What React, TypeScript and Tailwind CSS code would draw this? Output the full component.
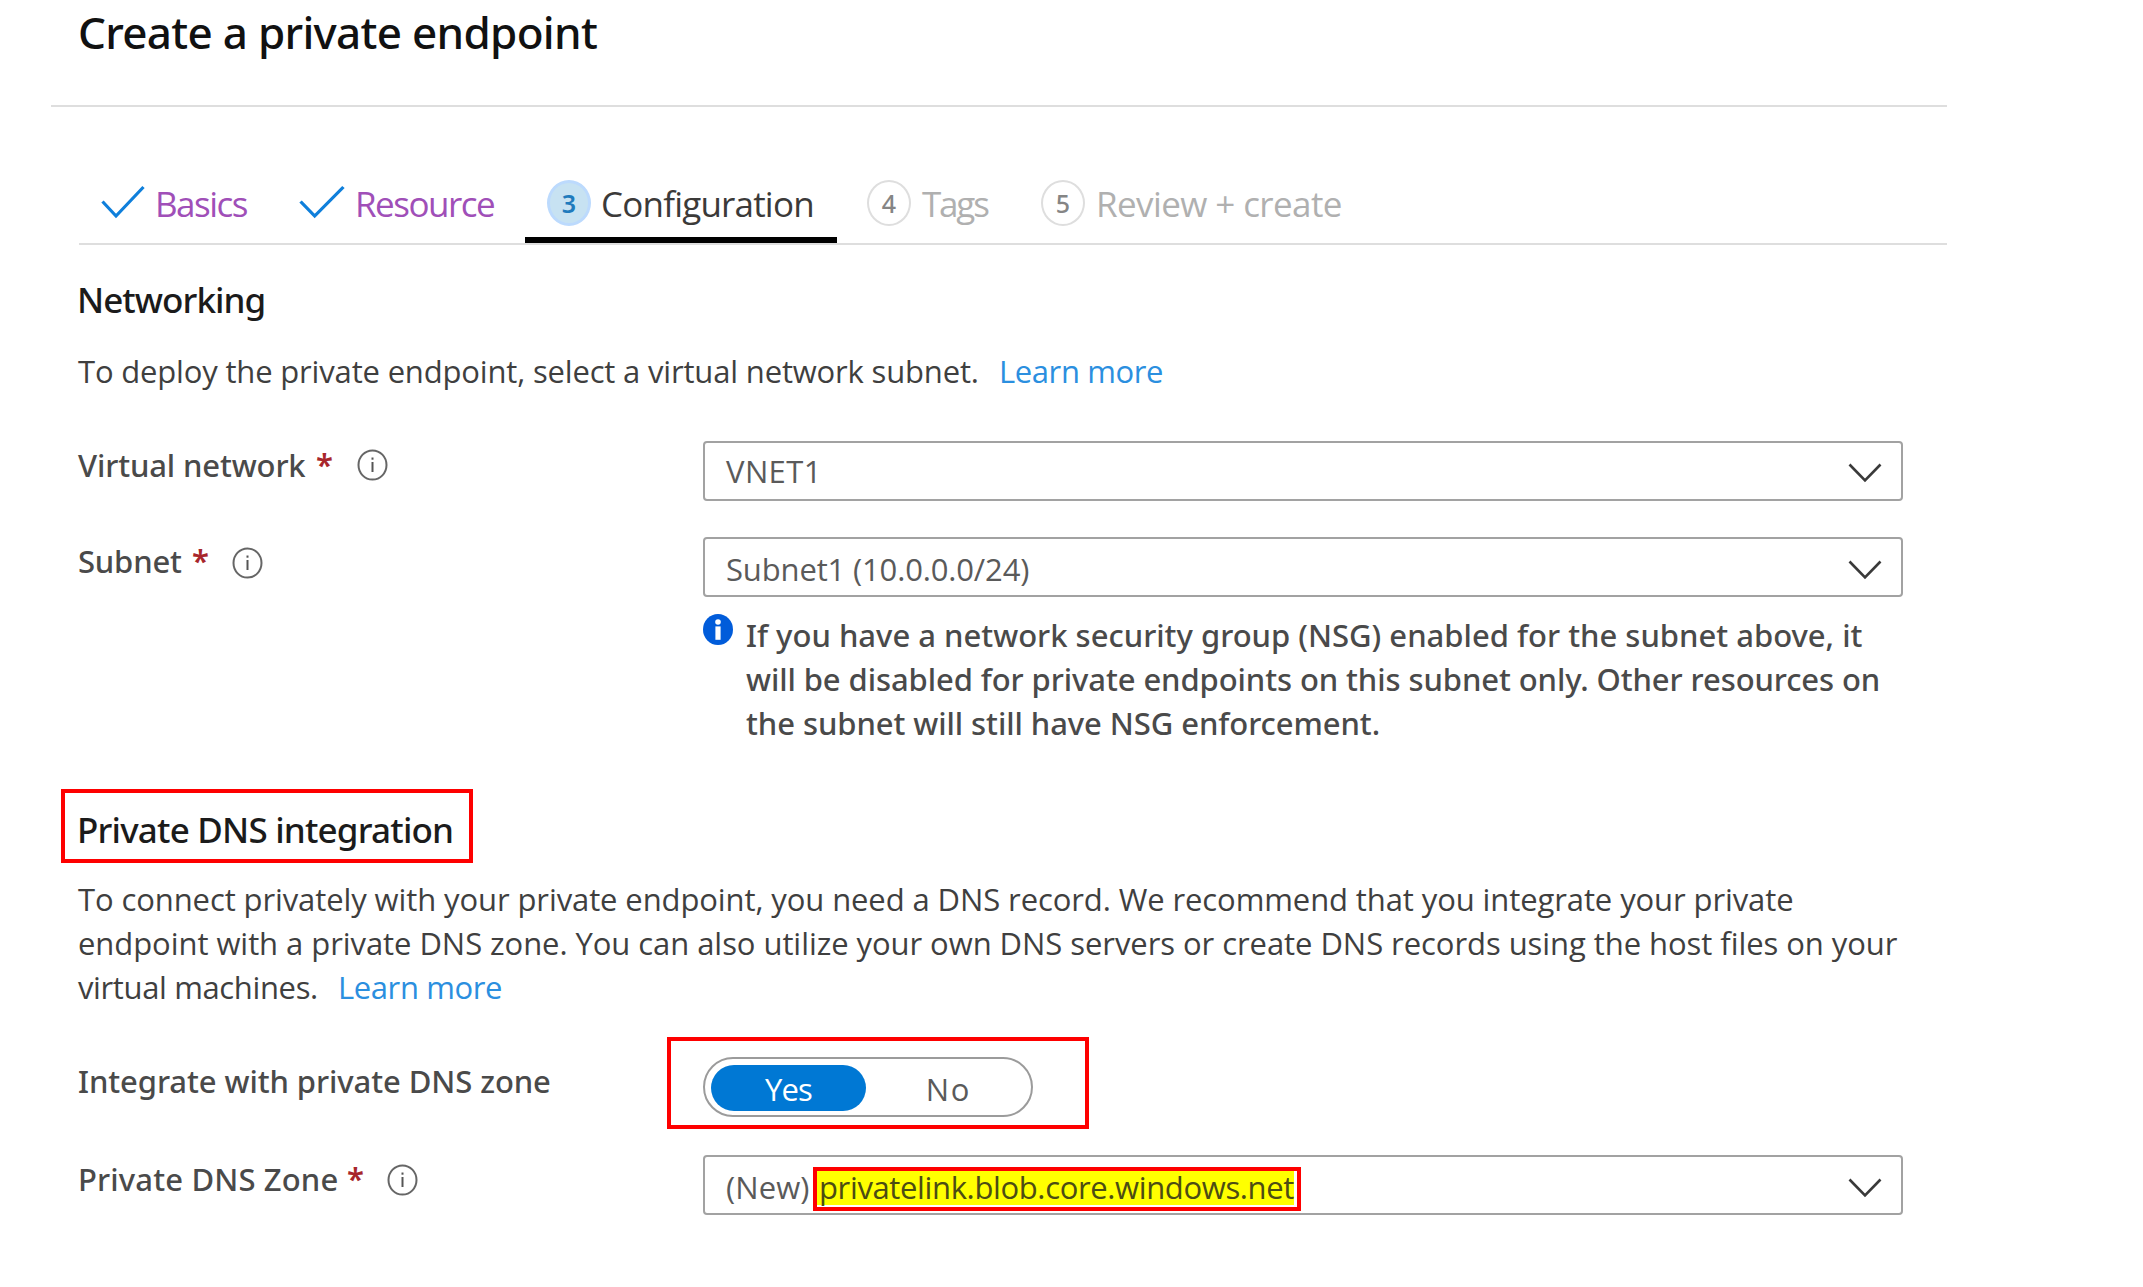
import type { ReactNode } from "react";

function Check({ className }: { className: string }) {
  return (
    <svg className={className} viewBox="0 0 44 34" fill="none" preserveAspectRatio="none">
      <path d="M1.5 16.5 L15 31 L42.5 2" stroke="#0f7fdb" strokeWidth="3.2" />
    </svg>
  );
}

function StepNumber({ children, active = false }: { children: ReactNode; active?: boolean }) {
  return (
    <span
      className={
        active
          ? "-mt-[2px] flex h-[46px] w-[44px] shrink-0 items-center justify-center rounded-[50%] border-[3px] border-[#bcdafd] bg-[#c7e2f2] font-['Noto_Sans',sans-serif] text-[25px] font-semibold text-[#1f7bbd]"
          : "-mt-[2px] flex h-[46px] w-[44px] shrink-0 items-center justify-center rounded-[50%] border-[2.5px] border-[#dedede] font-['Noto_Sans',sans-serif] text-[25px] font-medium text-[#858585]"
      }
    >
      {children}
    </span>
  );
}

function InfoCircle() {
  return (
    <svg className="h-8 w-[31px] shrink-0" viewBox="0 0 31 32" fill="none">
      <ellipse cx="15.5" cy="16" rx="14" ry="14.6" stroke="#666" strokeWidth="2" />
      <path d="M15.5 13v10" stroke="#555" strokeWidth="2" />
      <path d="M15.5 8.5v2.2" stroke="#555" strokeWidth="2" />
    </svg>
  );
}

function InfoSolid() {
  return (
    <svg className="mt-[1px] h-[31px] w-[30px] shrink-0" viewBox="0 0 30 31">
      <ellipse cx="15" cy="15.5" rx="15" ry="15.5" fill="#015cda" />
      <circle cx="15" cy="8" r="2.8" fill="#fff" />
      <path d="M12.4 12.4h5.2v13.4h-5.2z" fill="#fff" />
    </svg>
  );
}

function Star() {
  return <span className="-mt-[3px] text-[31px] leading-[44px] font-semibold text-[#a8262c]">*</span>;
}

function Select({ children, low = false }: { children: ReactNode; low?: boolean }) {
  return (
    <div className="flex h-[60px] w-[1200px] items-start justify-between rounded-[4px] border-2 border-[#a2a2a2] pr-[19px] pl-[21px] text-[31px] leading-[44px] text-[#5a5a5a]">
      <div className={low ? "mt-[8px] flex" : "mt-[6px] flex"}>{children}</div>
      <svg className={low ? "mt-[21px] h-5 w-[34px]" : "mt-[20px] h-5 w-[34px]"} viewBox="0 0 34 20" fill="none">
        <path d="M1.5 1.5 L17 17.5 L32.5 1.5" stroke="#3a3a3a" strokeWidth="2.6" />
      </svg>
    </div>
  );
}

export default function App() {
  return (
    <div className="h-[1287px] w-[2143px] overflow-hidden bg-white font-['Open_Sans','Noto_Sans',sans-serif] whitespace-nowrap text-[#3f3f3f]">
      <header className="ml-[51px] h-[107px] w-[1896px] border-b-2 border-[#dedede] pt-[2px] pl-[27px]">
        <h1 className="font-['Noto_Sans',sans-serif] text-[44px] leading-[60px] font-medium tracking-[-0.7px] text-[#111]">
          Create a private endpoint
        </h1>
      </header>

      <nav className="ml-[79px] flex h-[138px] w-[1868px] items-end border-b-2 border-[#dedede] pl-[22px] text-[35px] leading-[44px]">
        <div className="flex items-center pb-[17px] text-[#a04fb8]">
          <Check className="-mt-[4px] h-[34px] w-[44px]" />
          <span className="ml-[10px] w-[144px] tracking-[-1.5px]">Basics</span>
        </div>
        <div className="flex items-center pb-[17px] text-[#a04fb8]">
          <Check className="-mt-[4px] h-[34px] w-[46px]" />
          <span className="ml-[10px] w-[170px] tracking-[-1.5px]">Resource</span>
        </div>
        <div className="flex items-center border-b-[6px] border-black pb-[11px] pl-[22px] text-[#3b3a39]">
          <StepNumber active>3</StepNumber>
          <span className="ml-[10px] w-[236px] tracking-[-0.8px]">Configuration</span>
        </div>
        <div className="flex items-center pb-[17px] pl-[30px] text-[#b0b0b0]">
          <StepNumber>4</StepNumber>
          <span className="ml-[11px] w-[119px] tracking-[-2.2px]">Tags</span>
        </div>
        <div className="flex items-center pb-[17px] text-[#b0b0b0]">
          <StepNumber>5</StepNumber>
          <span className="ml-[11px] tracking-[-0.6px]">Review + create</span>
        </div>
      </nav>

      <main className="pl-[78px] text-[31px] leading-[44px]">
        <h2 className="mt-[33px] -ml-[1px] font-['Noto_Sans',sans-serif] text-[35px] font-medium tracking-[-0.95px] text-[#1b1b1b]">
          Networking
        </h2>
        <p className="mt-[27px] flex">
          <span className="w-[921px] tracking-[-0.17px]">
            To deploy the private endpoint, select a virtual network subnet.
          </span>
          <a className="tracking-[-0.4px] text-[#2b8fdf]">Learn more</a>
        </p>

        <div className="mt-12 flex">
          <div className="mt-[2px] flex h-11 w-[625px] items-center font-['Noto_Sans',sans-serif] font-medium text-[#4a4a4a]">
            <span className="w-[238px] tracking-[-0.13px]">Virtual network</span>
            <Star />
            <span className="ml-[24px] flex">
              <InfoCircle />
            </span>
          </div>
          <Select>
            <span className="tracking-[0.4px]">VNET1</span>
          </Select>
        </div>

        <div className="mt-9 flex">
          <div className="mt-[2px] flex h-11 w-[625px] items-center font-['Noto_Sans',sans-serif] font-medium text-[#4a4a4a]">
            <span className="w-[114px] tracking-[-0.19px]">Subnet</span>
            <Star />
            <span className="mt-[3px] ml-[23px] flex">
              <InfoCircle />
            </span>
          </div>
          <Select low>
            <span className="tracking-[-0.15px]">Subnet1 (10.0.0.0/24)</span>
          </Select>
        </div>

        <div className="mt-4 ml-[625px] flex">
          <InfoSolid />
          <p className="ml-[13px] font-['Noto_Sans',sans-serif] font-medium text-[#4a4a4a]">
            <span className="block">
              If you have a network security group (NSG) enabled for the subnet above, it
            </span>
            <span className="block tracking-[-0.09px]">
              will be disabled for private endpoints on this subnet only. Other resources on
            </span>
            <span className="block tracking-[-0.07px]">the subnet will still have NSG enforcement.</span>
          </p>
        </div>

        <div className="mt-11 -ml-[17px] h-[74px] w-[412px] border-4 border-[#fe0000] pt-[15px] pl-[12px]">
          <h2 className="font-['Noto_Sans',sans-serif] text-[35px] font-medium tracking-[-0.8px] text-[#1b1b1b]">
            Private DNS integration
          </h2>
        </div>

        <p className="mt-[14px]">
          <span className="block tracking-[-0.1px]">
            To connect privately with your private endpoint, you need a DNS record. We recommend that you integrate your private
          </span>
          <span className="block tracking-[-0.06px]">
            endpoint with a private DNS zone. You can also utilize your own DNS servers or create DNS records using the host files on your
          </span>
          <span className="flex">
            <span className="w-[260px] tracking-[-0.37px]">virtual machines.</span>
            <a className="tracking-[-0.4px] text-[#2b8fdf]">Learn more</a>
          </span>
        </p>

        <div className="mt-7 flex">
          <div className="mt-[22px] w-[589px] font-['Noto_Sans',sans-serif] font-medium text-[#4a4a4a]">
            <span className="tracking-[-0.08px]">Integrate with private DNS zone</span>
          </div>
          <div className="h-[92px] w-[422px] border-4 border-[#fe0000] pt-4 pl-8">
            <div className="flex h-[60px] w-[330px] rounded-full border-2 border-[#9b9b9b] py-[6px] pl-[6px]">
              <div className="h-[46px] w-[156px] rounded-full bg-[#0078d4] pt-[2px] text-center tracking-[-0.9px] text-white">
                Yes
              </div>
              <div className="w-[166px] pt-[2px] pl-[60px] tracking-[1.5px] text-[#5a5a5a]">No</div>
            </div>
          </div>
        </div>

        <div className="mt-[26px] flex">
          <div className="mt-[2px] flex h-11 w-[625px] items-center font-['Noto_Sans',sans-serif] font-medium text-[#4a4a4a]">
            <span className="w-[269px] tracking-[0.15px]">Private DNS Zone</span>
            <Star />
            <span className="mt-[2px] ml-[23px] flex">
              <InfoCircle />
            </span>
          </div>
          <Select low>
            <span className="w-[87px] tracking-[0.1px]">(New)</span>
            <span className="mt-[2px] flex h-[44px] w-[488px] border-4 border-[#fe0000]">
              <span className="-mt-[6px] h-[44px] w-[477px] bg-[linear-gradient(#ff0,#ff0)] bg-[length:100%_34px] bg-[position:0_6px] bg-no-repeat pl-[2px] tracking-[-0.36px] text-[#4c4c14]">
                privatelink.blob.core.windows.net
              </span>
            </span>
          </Select>
        </div>
      </main>
    </div>
  );
}
